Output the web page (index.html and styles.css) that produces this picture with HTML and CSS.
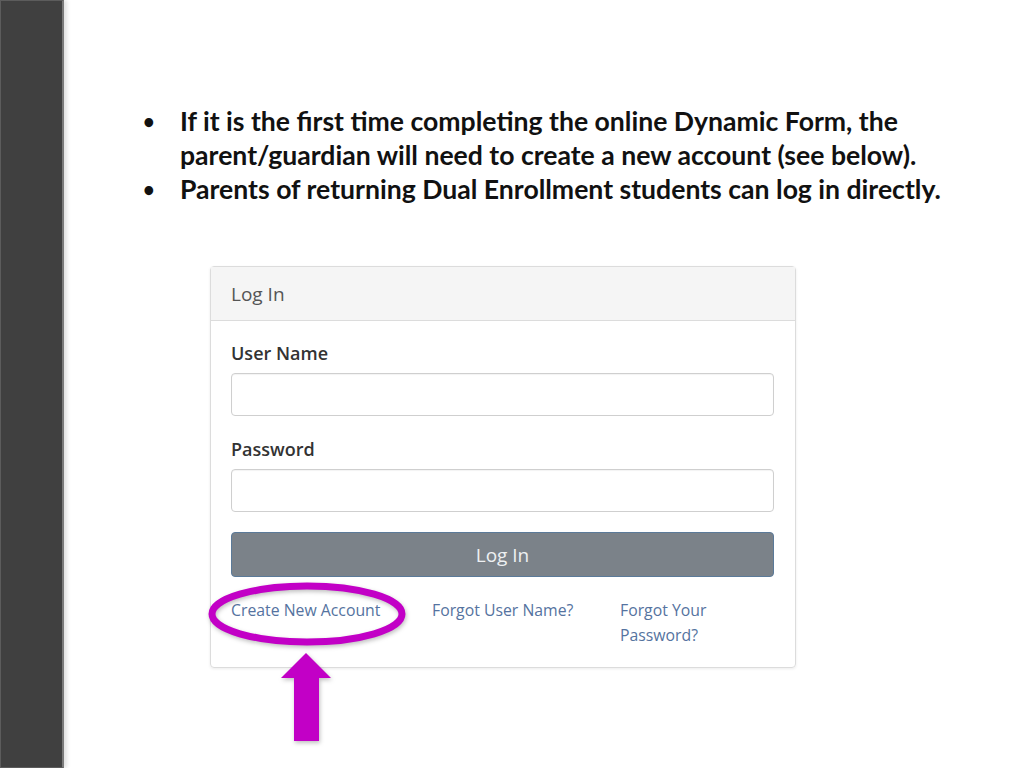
FILE: index.html
```html
<!DOCTYPE html>
<html lang="en">
<head>
    <meta charset="UTF-8">
    <meta name="viewport" content="width=device-width, initial-scale=1.0">
    <title>Dual Enrollment - Log In</title>
    <link rel="stylesheet" href="styles.css">
</head>
<body>
    <div class="slide">
        <div class="side-bar"></div>

        <div class="slide-body">
            <ul class="notes">
                <li class="note">
                    <span class="dot">&bull;</span>
                    <span>If it is the first time completing the online Dynamic Form, the parent/guardian will need to create a new account (see below).</span>
                </li>
                <li class="note">
                    <span class="dot">&bull;</span>
                    <span>Parents of returning Dual Enrollment students can log in directly.</span>
                </li>
            </ul>

            <!-- 로그인 화면 캡처 -->
            <div class="login-card">
                <div class="login-head">Log In</div>
                <div class="login-body">
                    <label class="field-label">User Name</label>
                    <div class="field-input"></div>
                    <label class="field-label">Password</label>
                    <div class="field-input"></div>
                    <div class="login-button">Log In</div>
                    <div class="login-links">
                        <a class="login-link">Create New Account</a>
                        <a class="login-link">Forgot User Name?</a>
                        <a class="login-link">Forgot Your Password?</a>
                    </div>
                </div>

                <!-- 동그라미 + 화살표 표시 -->
                <svg class="marker" width="586" height="480" viewBox="0 0 586 480">
                    <ellipse cx="96" cy="347" rx="95" ry="28" fill="none" stroke="#c200c6" stroke-width="7"/>
                    <polygon points="95,386 120,411 108,411 108,474 83,474 83,411 70,411" fill="#c200c6"/>
                </svg>
            </div>
        </div>
    </div>
</body>
</html>
```

FILE: styles.css
```css
* {
    padding: 0;
    margin: 0;
    box-sizing: border-box;
}

body {
    background-color: white;
    font-family: "Open Sans", "Liberation Sans", sans-serif;
}

.slide {
    display: flex;
    width: 1024px;
    height: 768px;
    overflow: hidden;
}

.side-bar {
    width: 64px;
    height: 768px;
    flex-shrink: 0;
    background-color: #404040;
    border: 1px solid #5c5c5c;
    border-right: 2px solid #7a7a7a;
    box-shadow: 3px 0 4px rgba(0, 0, 0, 0.12);
}

.slide-body {
    flex-grow: 1;
    padding-top: 104px;
}

.notes {
    list-style: none;
    padding-left: 77px;
    font-family: Lato, "Liberation Sans", sans-serif;
    font-weight: bold;
    font-size: 26.6px;
    line-height: 34px;
    color: #111;
    width: 920px;
}

.note {
    display: flex;
}

.dot {
    width: 39px;
    flex-shrink: 0;
    font-size: 20px;
    padding-left: 2px;
}

.login-card {
    position: relative;
    margin-top: 60px;
    margin-left: 146px;
    width: 586px;
    border: 1px solid #dcdcdc;
    border-radius: 4px;
    box-shadow: 0 1px 3px rgba(0, 0, 0, 0.08);
}

.login-head {
    height: 54px;
    padding-left: 20px;
    display: flex;
    align-items: center;
    background-color: #f5f5f5;
    border-bottom: 1px solid #dcdcdc;
    font-size: 19px;
    color: #555;
}

.login-body {
    padding: 20px 21px 19px 20px;
}

.field-label {
    display: block;
    font-size: 18px;
    font-weight: 600;
    line-height: 24px;
    color: #333;
    margin-bottom: 8px;
}

.field-input {
    height: 43px;
    border: 1px solid #cfcfcf;
    border-radius: 4px;
    box-shadow: inset 0 1px 1px rgba(0, 0, 0, 0.05);
    margin-bottom: 21px;
}

.login-button {
    margin-top: -1px;
    height: 45px;
    background-color: #7b8289;
    border: 1px solid #5b7a99;
    border-radius: 4px;
    color: #eef0f2;
    font-size: 19px;
    display: flex;
    align-items: center;
    justify-content: center;
}

.login-links {
    display: grid;
    grid-template-columns: 201px 188px 110px;
    margin-top: 21px;
    font-size: 15.8px;
    line-height: 25px;
    color: #5573a0;
}

.marker {
    position: absolute;
    left: 0;
    top: 0;
    overflow: visible;
    pointer-events: none;
    filter: drop-shadow(1px 2px 2px rgba(0, 0, 0, 0.25));
}
```
